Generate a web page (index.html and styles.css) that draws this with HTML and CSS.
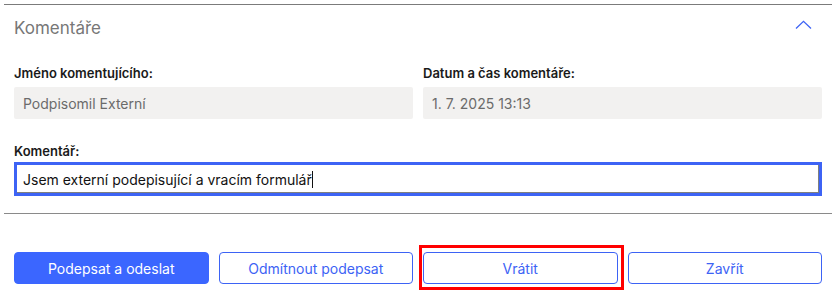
FILE: index.html
```html
<!DOCTYPE html>
<html lang="cs">
<head>
  <meta charset="UTF-8" />
  <meta name="viewport" content="width=device-width, initial-scale=1.0"/>
  <title>Komentáře</title>
  <link rel="stylesheet" href="styles.css">
</head>
<body>
  <div class="panel">
    <div class="panel-head">
      <span class="panel-title">Komentáře</span>
      <svg class="chevron" width="17" height="9" viewBox="0 0 17 9">
        <polyline points="1,8.5 8.5,1.3 16,8.5" fill="none" stroke="#3d63f5" stroke-width="1.3" />
      </svg>
    </div>

    <div class="panel-body">
      <div class="row">
        <div class="field">
          <label>Jméno komentujícího:</label>
          <div class="readonly">Podpisomil Externí</div>
        </div>
        <div class="field">
          <label>Datum a čas komentáře:</label>
          <div class="readonly">1. 7. 2025 13:13</div>
        </div>
      </div>

      <div class="field comment">
        <label>Komentář:</label>
        <div class="textbox">Jsem externí podepisující a vracím formulář<span class="caret"></span></div>
      </div>
    </div>
  </div>

  <div class="actions">
    <button class="btn primary">Podepsat a odeslat</button>
    <button class="btn">Odmítnout podepsat</button>
    <div class="marked">
      <button class="btn">Vrátit</button>
    </div>
    <button class="btn">Zavřít</button>
  </div>
</body>
</html>
```

FILE: styles.css
```css
* {
  box-sizing: border-box;
  font-family: Inter, 'Liberation Sans', sans-serif;
}

html,
body {
  min-height: 100%;
}

body {
  margin: 0;
  min-height: 100vh;
  background: #ffffff;
  color: #1a1a1a;
}

.panel {
  margin: 4px 4px 0;
  border-top: 1px solid #7b7b7b;
  border-bottom: 1px solid #8a8a8a;
}

.panel-head {
  height: 46px;
  padding: 0 10px;
  display: flex;
  justify-content: space-between;
  align-items: center;
}

.panel-title {
  font-size: 17px;
  color: #777777;
}

.chevron {
  margin: 0 10px 8px 0;
}

.panel-body {
  padding: 14px 10px 17px;
}

.row {
  display: grid;
  grid-template-columns: 1fr 1fr;
  gap: 10px;
}

.field label {
  display: block;
  font-size: 13px;
  font-weight: 600;
  line-height: 16px;
  color: #1a1a1a;
  margin-bottom: 6px;
}

.readonly {
  height: 32px;
  padding: 0 9px;
  display: flex;
  align-items: center;
  background: #f2f1f0;
  border-radius: 2px;
  font-size: 14px;
  color: #6b6b6b;
}

.comment {
  margin-top: 24px;
}

.comment label {
  margin-bottom: 3px;
}

.textbox {
  height: 34px;
  padding: 0 6px;
  display: flex;
  align-items: center;
  border: 3px solid #3d63f5;
  box-shadow: inset -1px -1px 0 #7f7f7f;
  font-size: 14px;
  color: #111111;
}

.caret {
  display: inline-block;
  width: 1px;
  height: 17px;
  background: #111111;
}

.actions {
  display: grid;
  grid-template-columns: repeat(4, 1fr);
  gap: 10px;
  padding: 38px 14px 22px;
}

.btn {
  width: 100%;
  height: 32px;
  border: 1px solid #3d63f5;
  border-radius: 4px;
  background: #ffffff;
  color: #3d63f5;
  font-size: 14px;
  cursor: pointer;
}

.btn.primary {
  background: #3b66ff;
  border-color: #3b66ff;
  color: #ffffff;
}

/* red highlight frame drawn over the "Vrátit" button */
.marked {
  position: relative;
  display: flex;
}

.marked::after {
  content: "";
  position: absolute;
  top: -7px;
  right: -6px;
  bottom: -6px;
  left: -4px;
  border: 3px solid #ff0000;
  pointer-events: none;
}
```
